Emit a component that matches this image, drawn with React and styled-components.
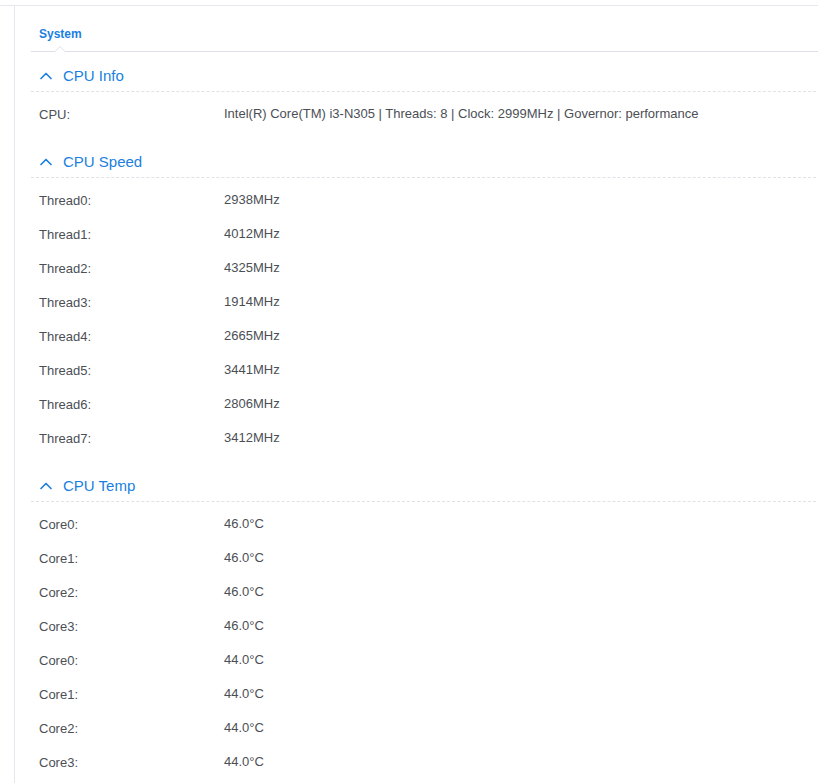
import React from 'react'
import styled, { createGlobalStyle } from 'styled-components'
import { ChevronUp } from 'lucide-react'

const Global = createGlobalStyle`
body{
    margin:0;
    background:#fff;
    font-family:"Liberation Sans", Arial, sans-serif;
}
`

const Page = styled.div`
margin-top:5px;
border-top:1px solid #e4e7eb;
display:flex;
min-height:777px;
`

const Rail = styled.div`
width:14px;
border-right:1px solid #e4e7eb;
flex-shrink:0;
`

const Content = styled.div`
flex:1;
margin-left:16px;
`

const Tabs = styled.div`
height:45px;
border-bottom:1px solid #dde1e6;
display:flex;
align-items:flex-end;
`

const Tab = styled.div`
position:relative;
padding:0 8px 10px;
font-size:12px;
font-weight:bold;
color:#1a7fe0;

&::before,&::after{
    content:'';
    position:absolute;
    left:50%;
    bottom:-1px;
    width:0;
    height:0;
    border-style:solid;
}
&::before{
    margin-left:-6px;
    border-width:0 6px 6px 6px;
    border-color:transparent transparent #dde1e6 transparent;
}
&::after{
    margin-left:-5px;
    border-width:0 5px 5px 5px;
    border-color:transparent transparent #fff transparent;
}
`

const Section = styled.div`
padding-bottom:7px;
`

const Header = styled.div`
display:flex;
align-items:center;
gap:7px;
padding:14px 8px 5px 5px;
border-bottom:1px dashed #dfe3e8;
margin-right:2px;
font-size:15px;
color:#1a7fe0;
line-height:20px;
`

const Body = styled.div`
padding-top:5px;
`

const Row = styled.div`
display:grid;
grid-template-columns:185px 1fr;
height:34px;
align-items:center;
padding-left:8px;
font-size:13px;
`

const Label = styled.span`
color:#4b4f55;
padding-top:1px;
`

const Value = styled.span`
color:#4b4f55;
margin-top:-1px;
`

const sections = [
    { title: 'CPU Info', rows: [['CPU:', 'Intel(R) Core(TM) i3-N305 | Threads: 8 | Clock: 2999MHz | Governor: performance']] },
    {
        title: 'CPU Speed',
        rows: [
            ['Thread0:', '2938MHz'], ['Thread1:', '4012MHz'], ['Thread2:', '4325MHz'], ['Thread3:', '1914MHz'],
            ['Thread4:', '2665MHz'], ['Thread5:', '3441MHz'], ['Thread6:', '2806MHz'], ['Thread7:', '3412MHz'],
        ],
    },
    {
        title: 'CPU Temp',
        rows: [
            ['Core0:', '46.0°C'], ['Core1:', '46.0°C'], ['Core2:', '46.0°C'], ['Core3:', '46.0°C'],
            ['Core0:', '44.0°C'], ['Core1:', '44.0°C'], ['Core2:', '44.0°C'], ['Core3:', '44.0°C'],
        ],
    },
]

export default function App() {
    return (
        <>
            <Global />
            <Page>
                <Rail />
                <Content>
                    <Tabs>
                        <Tab>System</Tab>
                    </Tabs>
                    {sections.map((s) => (
                        <Section key={s.title}>
                            <Header>
                                <ChevronUp size={20} strokeWidth={2} />
                                {s.title}
                            </Header>
                            <Body>
                                {s.rows.map(([k, v], i) => (
                                    <Row key={i}>
                                        <Label>{k}</Label>
                                        <Value>{v}</Value>
                                    </Row>
                                ))}
                            </Body>
                        </Section>
                    ))}
                </Content>
            </Page>
        </>
    )
}
